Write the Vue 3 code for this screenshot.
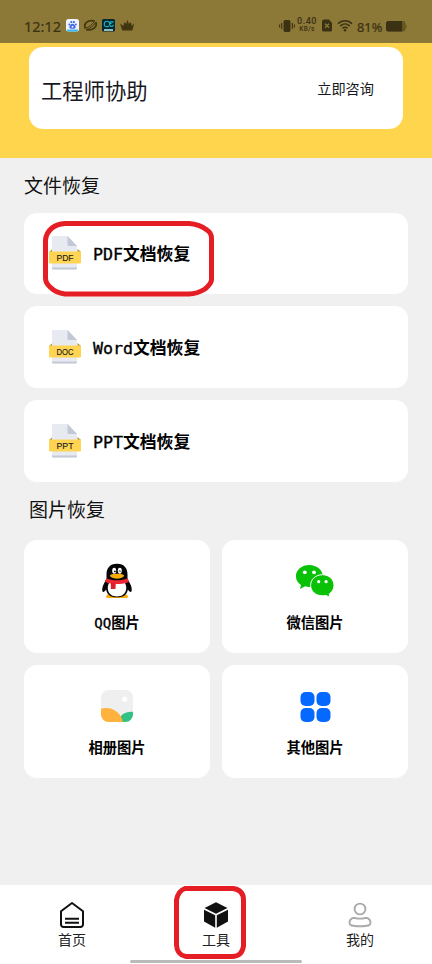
<script setup>
const files = [
  { tag: 'PDF', latin: 'PDF', marked: true },
  { tag: 'DOC', latin: 'Word', marked: false },
  { tag: 'PPT', latin: 'PPT', marked: false }
]
const pictures = [
  { icon: 'qq', latin: 'QQ', name: '图片' },
  { icon: 'wechat', latin: '', name: '微信图片' },
  { icon: 'album', latin: '', name: '相册图片' },
  { icon: 'other', latin: '', name: '其他图片' }
]
</script>

<template>
  <div class="screen">
    <header class="hero">
      <div class="status">
        <span class="clock">12:12</span>
        <svg class="apps" width="68" height="14" viewBox="0 0 68 14">
          <rect x="0" y="0" width="13" height="12.500" rx="2.500" fill="#eef3ff" />
          <path d="M1 10.500h11v.5a1.500 1.500 0 0 1-1.500 1.500h-8a1.500 1.500 0 0 1-1.500-1.500z" fill="#38b8ee" />
          <g fill="#4268dd"><circle cx="3.300" cy="5.500" r="1" /><circle cx="5.300" cy="3.100" r="1.100" /><circle cx="7.900" cy="3.100" r="1.100" /><circle cx="9.800" cy="5.500" r="1" /><path d="M6.500 4.700c1.500 0 3.200 2.200 3.200 3.600S8 9.800 6.500 9.800 3.300 9.700 3.300 8.300 5 4.700 6.500 4.700z" /></g>
          <circle cx="6.500" cy="7.700" r="1" fill="#eef3ff" />
          <g fill="none" stroke="#40360f" stroke-width="1.700"><path d="M19.300 9.300C17.300 4.500 22 .2 28.600 2" /><path d="M29.800 3.200C31.600 7.500 27 12.200 20.400 10.700" /><path d="M19.300 9.300C22.500 8.800 26.500 5.600 28.600 2M20.400 10.700C23.500 10 27.500 7 29.800 3.200" stroke-width="1" /></g>
          <rect x="36" y="0" width="13" height="12.500" rx="1.500" fill="#08262f" />
          <path d="M43 3C40.500 1.300 38.200 2.800 38.200 5.200S40.500 8.500 43 7M47.500 3.400c-2-1.500-4.500-.2-3.900 2.200s3.400 2.300 4 .2M43 3l2.500 1.800" fill="none" stroke="#19b8c6" stroke-width="1.200" />
          <path d="M38 11h9" stroke="#b5f3f7" stroke-width="1.500" />
          <path d="M54 4.400l3.300 2.500.9-3.700 2.100 1.600L61.500.8l1.400 4 2-1.600.9 3.700 2.400-2.500-1.900 7H56.300z" fill="#40360f" />
        </svg>
        <div class="right">
          <svg width="16" height="14" viewBox="0 0 16 14"><rect x="4.500" y="1" width="7" height="12" rx="1.800" fill="#3b3214" /><path d="M2.700 4v6M.6 5.500v3M13.300 4v6M15.400 5.500v3" stroke="#3b3214" stroke-width="1.100" /></svg>
          <span class="speed"><b>0.40</b><i>KB/s</i></span>
          <svg class="sim" width="10" height="13" viewBox="0 0 10 13"><path d="M2 .5h5L10 4v7a1.500 1.500 0 0 1-1.500 1.500h-7A1.500 1.500 0 0 1 0 11V2.500A2 2 0 0 1 2 .5z" fill="#3b3214" /><path d="M3 4.800l4 4M7 4.800l-4 4" stroke="#8c7837" stroke-width="1.300" /></svg>
          <svg class="wifi" width="16" height="13" viewBox="0 0 16 13"><g fill="none" stroke="#3b3214" stroke-width="1.500"><path d="M1 4.700c4-4 10-4 14 0" /><path d="M3.300 7.100c2.800-2.800 6.600-2.800 9.400 0" /><path d="M5.500 9.400c1.500-1.500 3.500-1.500 5 0" /></g><circle cx="8" cy="11.300" r="1.200" fill="#3b3214" /></svg>
          <span class="percent">81%</span>
          <svg width="21" height="12" viewBox="0 0 21 12"><rect x="0" y="1" width="19.500" height="10.500" rx="2.500" fill="#655622" /><path d="M2.500 1H16v10.500H2.500A2.500 2.500 0 0 1 0 9V3.500A2.500 2.500 0 0 1 2.500 1z" fill="#3b3214" /><path d="M19.500 4.500l1.200 1v2l-1.200 1z" fill="#655622" /></svg>
        </div>
      </div>
      <div class="assist">
        <span class="assist-title">工程师协助</span>
        <span class="assist-link">立即咨询</span>
      </div>
    </header>

    <main class="content">
      <h2>文件恢复</h2>
      <section class="files">
        <div v-for="file in files" :key="file.tag" class="file">
          <svg class="doc" width="32" height="36" viewBox="0 0 32 36">
            <path d="M0 17l3.500-3v4zM32 17l-3.500-3v4z" fill="#b39228" />
            <path d="M4 1h14.500l9.500 10v22.500a1 1 0 0 1-1 1H4a1 1 0 0 1-1-1V2a1 1 0 0 1 1-1z" fill="#e7eaf0" />
            <path d="M3 32.500v.7a1.400 1.400 0 0 0 1.400 1.400h22.200a1.400 1.400 0 0 0 1.400-1.400v-.7z" fill="#c5cad7" />
            <path d="M18.500 1L28 11H19.500a1 1 0 0 1-1-1z" fill="#c2c8d5" />
            <rect x="0" y="16.500" width="32" height="12" rx="1.200" fill="#ffd452" />
            <text x="16" y="25.800" text-anchor="middle" textLength="17" lengthAdjust="spacingAndGlyphs">{{ file.tag }}</text>
          </svg>
          <span class="file-name"><span class="latin">{{ file.latin }}</span>文档恢复</span>
          <svg v-if="file.marked" class="mark mark-file" width="172" height="76" viewBox="0 0 172 76"><path d="M22 2.500H146Q156 3 164 9Q168.500 12 168.500 17V59Q168 63 162 68Q154 73 146 73H22Q13 72 7 66Q2.500 62 2.500 57V19Q3 12 9 7Q14 3 22 2.500z" fill="none" stroke="#e51d25" stroke-width="5" /></svg>
        </div>
      </section>
      <h2 class="second">图片恢复</h2>
      <section class="pictures">
        <div v-for="item in pictures" :key="item.icon" class="picture">
          <svg v-if="item.icon === 'qq'" class="pic" width="40" height="36" viewBox="0 0 40 36">
            <path d="M9 33.500c0-2 4-3 7-2l4 1 4-1c3-1 7 0 7 2 0 1-1 1.500-3 1.500H12c-2 0-3-.5-3-1.500z" fill="#faad08" />
            <path d="M20 .7C12.500.7 9.500 5.500 9.500 11.500v4L6.300 22c-1.500 3.400-1.300 7 0 7 .8 0 1.900-1.300 2.800-2.500C10 31.500 13 34.300 20 34.300s10-2.800 10.900-7.800c.9 1.200 2 2.500 2.800 2.500 1.300 0 1.500-3.600 0-7l-3.200-6.500v-4C30.500 5.500 27.500.7 20 .7z" fill="#050505" />
            <path d="M12 20h16c1 2 1.500 4 1.200 6C28.600 31 25 33.400 20 33.400S11.400 31 10.800 26c-.2-2 .2-4 1.200-6z" fill="#fff" />
            <ellipse cx="17.200" cy="7.800" rx="2" ry="3" fill="#fff" /><ellipse cx="22.800" cy="7.800" rx="2" ry="3" fill="#fff" />
            <circle cx="17.900" cy="8.300" r=".9" /><path d="M22 8.600c.3-1.200 1.500-1.200 1.800 0" fill="none" stroke="#000" stroke-width=".8" />
            <path d="M13 12.800c0-1.200 3-2 7-2s7 .8 7 2c0 1.300-3.500 2.900-7 2.900s-7-1.600-7-2.900z" fill="#faad08" />
            <path d="M9.500 15.200c6 2.800 15 2.800 21 0l1.500 3.500c-1.700 1-4.500 1.700-7 2.100-4 .5-8.500.3-11.500-.3-2-.4-4.200-1-5.500-1.800z" fill="#ec2633" />
            <path d="M13.800 19.500l5 .7-.4 5.700h-4.600z" fill="#df1e2d" />
          </svg>
          <svg v-else-if="item.icon === 'wechat'" class="pic" width="40" height="36" viewBox="0 0 40 36">
            <path d="M14.300 2C6.700 2 .9 6.900.9 13.200c0 3.700 2 6.800 5.100 8.800l-1 4 5.100-2.700c1.300.3 2.800.6 4.200.6 7.600 0 13.500-4.700 13.500-10.700S21.900 2 14.300 2z" fill="#09c107" />
            <path d="M27.400 11.700c-6.700 0-11.800 4.700-11.800 10.600S20.700 32.800 27.400 32.800c1.200 0 2.300-.2 3.400-.4l4 1.800-.6-3.200c3-2 4.800-5.200 4.800-8.700 0-5.900-5-10.600-11.600-10.600z" fill="#09c107" stroke="#fff" stroke-width="1" />
            <g fill="#fff"><circle cx="9.800" cy="9.300" r="1.900" /><circle cx="19" cy="9.300" r="1.900" /><circle cx="23.700" cy="18.700" r="1.600" /><circle cx="31.100" cy="18.700" r="1.600" /></g>
          </svg>
          <svg v-else-if="item.icon === 'album'" class="pic" width="40" height="36" viewBox="0 0 40 36">
            <defs><clipPath id="album-shape"><rect x="4" y="2" width="32" height="32" rx="7.500" /></clipPath></defs>
            <g clip-path="url(#album-shape)"><rect x="4" y="2" width="32" height="32" fill="#efefef" /><path d="M22 35c0-8 6-12 15-11v12H22z" fill="#34c284" /><path d="M3 21c9-3 21 1 23 14H3z" fill="#ffb23c" /></g>
            <circle cx="27.700" cy="11.200" r="2.600" fill="#fff" />
          </svg>
          <svg v-else class="pic" width="40" height="36" viewBox="0 0 40 36" fill="#0568ff"><rect x="5.500" y="4" width="14" height="14" rx="5" /><rect x="21.500" y="4" width="14" height="14" rx="5" /><rect x="5.500" y="20" width="14" height="14" rx="5" /><rect x="21.500" y="20" width="14" height="14" rx="5" /></svg>
          <span class="pic-name"><span v-if="item.latin" class="latin">{{ item.latin }}</span>{{ item.name }}</span>
        </div>
      </section>
    </main>

    <nav class="tabs">
      <div class="tab">
        <svg width="28" height="28" viewBox="0 0 28 28" fill="none" stroke="#111" stroke-width="2"><path d="M14 2L25 10.200V23.500A2.500 2.500 0 0 1 22.500 26H5.500A2.500 2.500 0 0 1 3 23.500V10.200z" stroke-linejoin="round" /><path d="M7 17.700h14M7 21.700h14" /></svg>
        <span>首页</span>
      </div>
      <div class="tab">
        <svg width="28" height="28" viewBox="0 0 28 28" fill="#111"><path d="M14 1.200L25.500 7 14 12.800 2.500 7z" /><path d="M2 8.800l11.200 5.400v12.600L2 20.500zM26 8.800l-11.200 5.400v12.600L26 20.500z" /></svg>
        <span>工具</span>
        <svg class="mark mark-tab" width="72" height="73" viewBox="0 0 72 73"><path d="M11 2.500H59Q69.500 4 69.500 14V60Q68 70 59 70.500H12Q3 69 2.500 59V14Q4 5 11 2.500z" fill="none" stroke="#e51d25" stroke-width="5" /></svg>
      </div>
      <div class="tab">
        <svg width="28" height="28" viewBox="0 0 28 28" fill="none" stroke="#aaa" stroke-width="1.900"><circle cx="14" cy="8" r="5.400" /><path d="M8.200 16.800c3 .9 8.600.9 11.600 0 2.500 0 4.700 2.200 4.700 4.700 0 2-1.400 3.200-3.800 3.200-4.200.7-9.200.7-13.400 0-2.400 0-3.800-1.200-3.800-3.200 0-2.500 2.200-4.700 4.700-4.700z" /></svg>
        <span>我的</span>
      </div>
      <div class="indicator"></div>
    </nav>
  </div>
</template>

<style>
body { margin: 0; background: #f0f0f0; }
</style>

<style scoped>
.screen { width: 432px; height: 964px; display: flex; flex-direction: column; overflow: hidden; background: #f0f0f0; color: #111; font-family: "Noto Sans CJK SC", sans-serif; }
svg { display: block; flex: none; }
.hero { height: 158px; flex: none; background: #ffd54e; }
.status { height: 43px; box-sizing: border-box; padding: 8px 25px 0 24px; display: flex; align-items: center; background: #8c7837; color: #3b3214; font-family: "Noto Sans", sans-serif; }
.clock { width: 42px; font-size: 14.500px; line-height: 20px; font-weight: 400; -webkit-text-stroke: .2px #3b3214; white-space: nowrap; }
.right { margin-left: auto; display: flex; align-items: center; }
.speed { width: 22px; margin-left: 1px; padding-bottom: 1px; display: flex; flex-direction: column; align-items: center; font-family: Roboto, sans-serif; }
.speed b { font-size: 9px; line-height: 8px; font-weight: 500; letter-spacing: .5px; }
.speed i { font-size: 6.500px; line-height: 8px; font-style: normal; font-weight: 500; letter-spacing: .4px; }
.sim { margin-left: 4px; }
.wifi { margin-left: 5px; }
.percent { width: 26px; margin: 2px 3px 0 4px; font-size: 12.800px; line-height: 18px; font-weight: 400; -webkit-text-stroke: .2px #3b3214; }
.assist { height: 82px; box-sizing: border-box; margin: 4px 29px 0; padding: 0 29px 0 12px; display: flex; align-items: center; justify-content: space-between; border-radius: 14px; background: #fff; color: #171724; }
.assist-title { padding-top: 4px; font-size: 21.300px; line-height: 30px; }
.assist-link { padding-bottom: 1px; font-size: 14.200px; line-height: 20px; }
.content { flex: 1; padding: 13px 24px 0; }
h2 { margin: 0; font-size: 19px; font-weight: 400; line-height: 28px; color: #111; }
.second { margin-top: 14px; padding-left: 5px; }
.files { margin-top: 13.500px; display: grid; grid-auto-rows: 81.500px; gap: 12.300px; }
.second { position: static; margin-top: 13px; }
.file { position: relative; display: flex; align-items: center; padding-left: 25px; border-radius: 13px; background: #fff; }
.doc text { font: 8.800px "Liberation Sans", sans-serif; fill: #222; stroke: #222; stroke-width: .15px; }
.file-name { margin: 2px 0 0 12px; font-size: 16.800px; line-height: 24px; font-weight: 700; color: #000; white-space: nowrap; }
.latin { font-family: "DejaVu Sans Mono", monospace; font-weight: 400; font-size: .99em; -webkit-text-stroke: .35px #000; }
.pictures { margin-top: 17px; display: grid; grid-template-columns: 1fr 1fr; grid-auto-rows: 113px; gap: 12px; }
.picture { display: flex; flex-direction: column; align-items: center; border-radius: 13px; background: #fff; }
.pic { margin-top: 23px; }
.pic-name { margin-top: 13px; font-size: 14.300px; line-height: 20px; font-weight: 700; color: #000; white-space: nowrap; }
.tabs { position: relative; height: 79px; flex: none; display: grid; grid-template-columns: repeat(3, 1fr); background: #fff; }
.tab { position: relative; display: flex; flex-direction: column; align-items: center; padding-top: 16px; }
.tab span { font-size: 14px; line-height: 20px; color: #222; }
.mark { position: absolute; pointer-events: none; }
.mark-file { left: 19px; top: 8.500px; }
.mark-tab { left: 30px; top: 1px; }
.indicator { position: absolute; bottom: 1px; left: 130px; width: 172px; height: 3px; border-radius: 2px; background: #b9bbb9; }
</style>
